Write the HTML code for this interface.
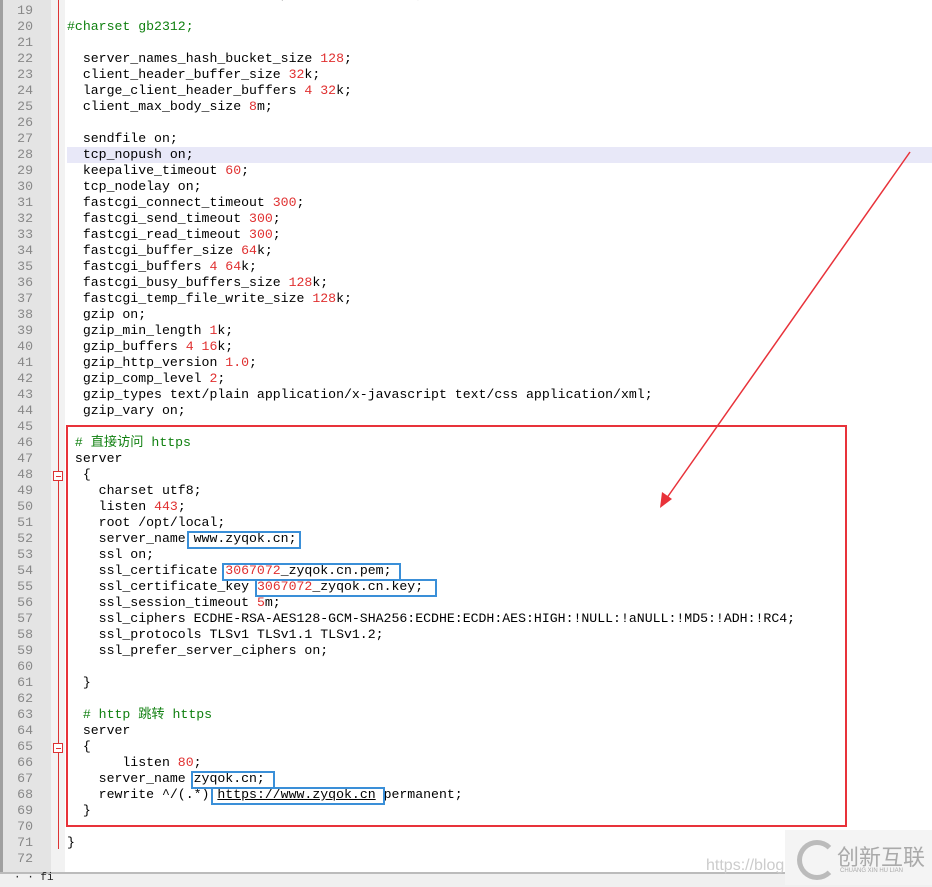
<!DOCTYPE html>
<html><head><meta charset="utf-8"><style>
body{margin:0;width:932px;height:885px;overflow:hidden;background:#fff;position:relative;font-family:"Liberation Mono","Noto Sans CJK SC",monospace;font-size:13.2px}
#lb{position:absolute;left:0;top:0;width:3px;height:872px;background:#a0a0a0}
#ln{position:absolute;left:3px;top:0;width:48px;height:872px;background:#e4e4e4}
#fm{position:absolute;left:51px;top:0;width:14px;height:872px;background:#f2f2f2}
#rl{position:absolute;left:58px;top:0;width:1px;height:849px;background:#d33}
.l{position:absolute;left:0;height:16px;line-height:16px;white-space:pre;width:932px}
.n{position:absolute;left:3px;width:30px;text-align:right;color:#888}
.c{position:absolute;left:67px;color:#000}
.r{color:#e03030}.g{color:#108010}
#hl{position:absolute;left:67px;top:147px;width:865px;height:16px;background:#e8e8f8}
.box{position:absolute;border:2px solid #e8323a}
.bb{position:absolute;border:2px solid #3a8fd8}
.fb{position:absolute;left:53px;width:8px;height:8px;border:1px solid #d33;background:#fff}
.fb:after{content:"";position:absolute;left:2px;top:4px;width:5px;height:1px;background:#d33}
#bot{position:absolute;left:0;top:872px;width:932px;height:13px;background:#f0f0f0;border-top:2px solid #bbb}
#wm{position:absolute;left:785px;top:830px;width:147px;height:55px;background:#f4f4f4}
</style></head><body>
<div id="lb"></div><div id="ln"></div><div id="fm"></div><div id="rl"></div>
<div id="hl"></div>
<div id="code"></div>
<div class="l" style="top:-13px"><span class="c" style="color:#999">        $remote_addr - $http_x_forwarded_for;</span></div>
<div class="l" style="top:3px"><span class="n">19</span></div>
<div class="l" style="top:19px"><span class="n">20</span><span class="c g">#charset gb2312;</span></div>
<div class="l" style="top:35px"><span class="n">21</span></div>
<div class="l" style="top:51px"><span class="n">22</span><span class="c">  server_names_hash_bucket_size <span class="r">128</span>;</span></div>
<div class="l" style="top:67px"><span class="n">23</span><span class="c">  client_header_buffer_size <span class="r">32</span>k;</span></div>
<div class="l" style="top:83px"><span class="n">24</span><span class="c">  large_client_header_buffers <span class="r">4 32</span>k;</span></div>
<div class="l" style="top:99px"><span class="n">25</span><span class="c">  client_max_body_size <span class="r">8</span>m;</span></div>
<div class="l" style="top:115px"><span class="n">26</span></div>
<div class="l" style="top:131px"><span class="n">27</span><span class="c">  sendfile on;</span></div>
<div class="l" style="top:147px"><span class="n">28</span><span class="c">  tcp_nopush on;</span></div>
<div class="l" style="top:163px"><span class="n">29</span><span class="c">  keepalive_timeout <span class="r">60</span>;</span></div>
<div class="l" style="top:179px"><span class="n">30</span><span class="c">  tcp_nodelay on;</span></div>
<div class="l" style="top:195px"><span class="n">31</span><span class="c">  fastcgi_connect_timeout <span class="r">300</span>;</span></div>
<div class="l" style="top:211px"><span class="n">32</span><span class="c">  fastcgi_send_timeout <span class="r">300</span>;</span></div>
<div class="l" style="top:227px"><span class="n">33</span><span class="c">  fastcgi_read_timeout <span class="r">300</span>;</span></div>
<div class="l" style="top:243px"><span class="n">34</span><span class="c">  fastcgi_buffer_size <span class="r">64</span>k;</span></div>
<div class="l" style="top:259px"><span class="n">35</span><span class="c">  fastcgi_buffers <span class="r">4 64</span>k;</span></div>
<div class="l" style="top:275px"><span class="n">36</span><span class="c">  fastcgi_busy_buffers_size <span class="r">128</span>k;</span></div>
<div class="l" style="top:291px"><span class="n">37</span><span class="c">  fastcgi_temp_file_write_size <span class="r">128</span>k;</span></div>
<div class="l" style="top:307px"><span class="n">38</span><span class="c">  gzip on;</span></div>
<div class="l" style="top:323px"><span class="n">39</span><span class="c">  gzip_min_length <span class="r">1</span>k;</span></div>
<div class="l" style="top:339px"><span class="n">40</span><span class="c">  gzip_buffers <span class="r">4 16</span>k;</span></div>
<div class="l" style="top:355px"><span class="n">41</span><span class="c">  gzip_http_version <span class="r">1.0</span>;</span></div>
<div class="l" style="top:371px"><span class="n">42</span><span class="c">  gzip_comp_level <span class="r">2</span>;</span></div>
<div class="l" style="top:387px"><span class="n">43</span><span class="c">  gzip_types text/plain application/x-javascript text/css application/xml;</span></div>
<div class="l" style="top:403px"><span class="n">44</span><span class="c">  gzip_vary on;</span></div>
<div class="l" style="top:419px"><span class="n">45</span></div>
<div class="l" style="top:435px"><span class="n">46</span><span class="c g"> # 直接访问 https</span></div>
<div class="l" style="top:451px"><span class="n">47</span><span class="c"> server</span></div>
<div class="l" style="top:467px"><span class="n">48</span><span class="c">  {</span></div>
<div class="l" style="top:483px"><span class="n">49</span><span class="c">    charset utf8;</span></div>
<div class="l" style="top:499px"><span class="n">50</span><span class="c">    listen <span class="r">443</span>;</span></div>
<div class="l" style="top:515px"><span class="n">51</span><span class="c">    root /opt/local;</span></div>
<div class="l" style="top:531px"><span class="n">52</span><span class="c">    server_name www.zyqok.cn;</span></div>
<div class="l" style="top:547px"><span class="n">53</span><span class="c">    ssl on;</span></div>
<div class="l" style="top:563px"><span class="n">54</span><span class="c">    ssl_certificate <span class="r">3067072</span>_zyqok.cn.pem;</span></div>
<div class="l" style="top:579px"><span class="n">55</span><span class="c">    ssl_certificate_key <span class="r">3067072</span>_zyqok.cn.key;</span></div>
<div class="l" style="top:595px"><span class="n">56</span><span class="c">    ssl_session_timeout <span class="r">5</span>m;</span></div>
<div class="l" style="top:611px"><span class="n">57</span><span class="c">    ssl_ciphers ECDHE-RSA-AES128-GCM-SHA256:ECDHE:ECDH:AES:HIGH:!NULL:!aNULL:!MD5:!ADH:!RC4;</span></div>
<div class="l" style="top:627px"><span class="n">58</span><span class="c">    ssl_protocols TLSv1 TLSv1.1 TLSv1.2;</span></div>
<div class="l" style="top:643px"><span class="n">59</span><span class="c">    ssl_prefer_server_ciphers on;</span></div>
<div class="l" style="top:659px"><span class="n">60</span></div>
<div class="l" style="top:675px"><span class="n">61</span><span class="c">  }</span></div>
<div class="l" style="top:691px"><span class="n">62</span></div>
<div class="l" style="top:707px"><span class="n">63</span><span class="c g">  # http 跳转 https</span></div>
<div class="l" style="top:723px"><span class="n">64</span><span class="c">  server</span></div>
<div class="l" style="top:739px"><span class="n">65</span><span class="c">  {</span></div>
<div class="l" style="top:755px"><span class="n">66</span><span class="c">       listen <span class="r">80</span>;</span></div>
<div class="l" style="top:771px"><span class="n">67</span><span class="c">    server_name zyqok.cn;</span></div>
<div class="l" style="top:787px"><span class="n">68</span><span class="c">    rewrite ^/(.*) <u>https://www.zyqok.cn</u> permanent;</span></div>
<div class="l" style="top:803px"><span class="n">69</span><span class="c">  }</span></div>
<div class="l" style="top:819px"><span class="n">70</span></div>
<div class="l" style="top:835px"><span class="n">71</span><span class="c">}</span></div>
<div class="l" style="top:851px"><span class="n">72</span></div>
<div class="fb" style="top:471px"></div><div class="fb" style="top:743px"></div>
<div class="box" style="left:66px;top:425px;width:777px;height:398px"></div>
<div class="bb" style="left:187px;top:531px;width:110px;height:14px"></div>
<div class="bb" style="left:222px;top:563px;width:175px;height:14px"></div>
<div class="bb" style="left:255px;top:579px;width:178px;height:14px"></div>
<div class="bb" style="left:191px;top:771px;width:80px;height:14px"></div>
<div class="bb" style="left:211px;top:787px;width:170px;height:14px"></div>
<svg style="position:absolute;left:0;top:0" width="932" height="885"><line x1="910" y1="152" x2="664" y2="502" stroke="#e8323a" stroke-width="1.5"/><polygon points="660,508 662,492 672,499" fill="#e8323a"/></svg>
<div id="bot"><span style="position:absolute;left:14px;top:-2px;font-size:11px;color:#222">  ·    ·  fi</span></div>
<div id="wm"><div style="position:absolute;left:12px;top:10px;width:30px;height:30px;border-radius:50%;border:5px solid #bbb;border-right-color:transparent"></div><span style="position:absolute;left:52px;top:10px;font:22px 'Noto Sans CJK SC',sans-serif;color:#aaa">创新互联</span><span style="position:absolute;left:55px;top:38px;font:6px 'Liberation Sans',sans-serif;color:#aaa">CHUANG XIN HU LIAN</span></div>
<span style="position:absolute;left:706px;top:857px;font:16px 'Liberation Sans',sans-serif;color:#ccc">https://blog</span>
</body></html>
